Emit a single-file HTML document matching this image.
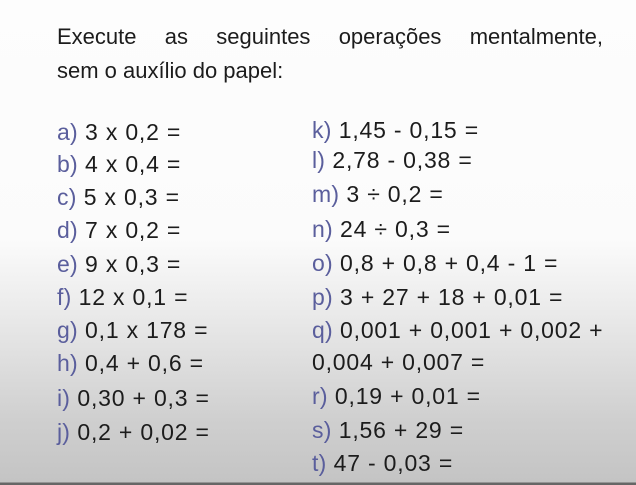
<!DOCTYPE html>
<html><head><meta charset="utf-8"><style>
html,body{margin:0;padding:0}
body{width:636px;height:485px;overflow:hidden;position:relative;font-family:"Liberation Sans",sans-serif;color:#1c1c1c;
background:linear-gradient(to bottom,#fdfdfd 0px,#fbfbfb 240px,#e6e6e6 330px,#cfcfcf 420px,#c4c4c4 482px,#666 483px,#666 485px);}
.t{position:absolute;left:57px;width:546px;font-size:22px;text-align:justify;text-align-last:justify;line-height:22px}
.r{position:absolute;font-size:23px;line-height:23px;white-space:nowrap;letter-spacing:0.8px}
.r b{font-weight:normal;color:#5a5e9c;letter-spacing:0.2px}
</style></head><body>
<div class="t" style="top:26px">Execute as seguintes operações mentalmente,</div>
<div class="t" style="top:60px;text-align-last:left">sem o auxílio do papel:</div>
<div class="r" style="left:57px;top:121px"><b>a)</b> 3 x 0,2 =</div>
<div class="r" style="left:57px;top:153px"><b>b)</b> 4 x 0,4 =</div>
<div class="r" style="left:57px;top:186px"><b>c)</b> 5 x 0,3 =</div>
<div class="r" style="left:57px;top:219px"><b>d)</b> 7 x 0,2 =</div>
<div class="r" style="left:57px;top:253px"><b>e)</b> 9 x 0,3 =</div>
<div class="r" style="left:57px;top:286px"><b>f)</b> 12 x 0,1 =</div>
<div class="r" style="left:57px;top:319px"><b>g)</b> 0,1 x 178 =</div>
<div class="r" style="left:57px;top:352px"><b>h)</b> 0,4 + 0,6 =</div>
<div class="r" style="left:57px;top:387px"><b>i)</b> 0,30 + 0,3 =</div>
<div class="r" style="left:57px;top:421px"><b>j)</b> 0,2 + 0,02 =</div>
<div class="r" style="left:312px;top:119px"><b>k)</b> 1,45 - 0,15 =</div>
<div class="r" style="left:312px;top:149px"><b>l)</b> 2,78 - 0,38 =</div>
<div class="r" style="left:312px;top:183px"><b>m)</b> 3 ÷ 0,2 =</div>
<div class="r" style="left:312px;top:218px"><b>n)</b> 24 ÷ 0,3 =</div>
<div class="r" style="left:312px;top:252px"><b>o)</b> 0,8 + 0,8 + 0,4 - 1 =</div>
<div class="r" style="left:312px;top:286px"><b>p)</b> 3 + 27 + 18 + 0,01 =</div>
<div class="r" style="left:312px;top:319px"><b>q)</b> 0,001 + 0,001 + 0,002 +</div>
<div class="r" style="left:312px;top:351px">0,004 + 0,007 =</div>
<div class="r" style="left:312px;top:385px"><b>r)</b> 0,19 + 0,01 =</div>
<div class="r" style="left:312px;top:419px"><b>s)</b> 1,56 + 29 =</div>
<div class="r" style="left:312px;top:452px"><b>t)</b> 47 - 0,03 =</div>
</body></html>
